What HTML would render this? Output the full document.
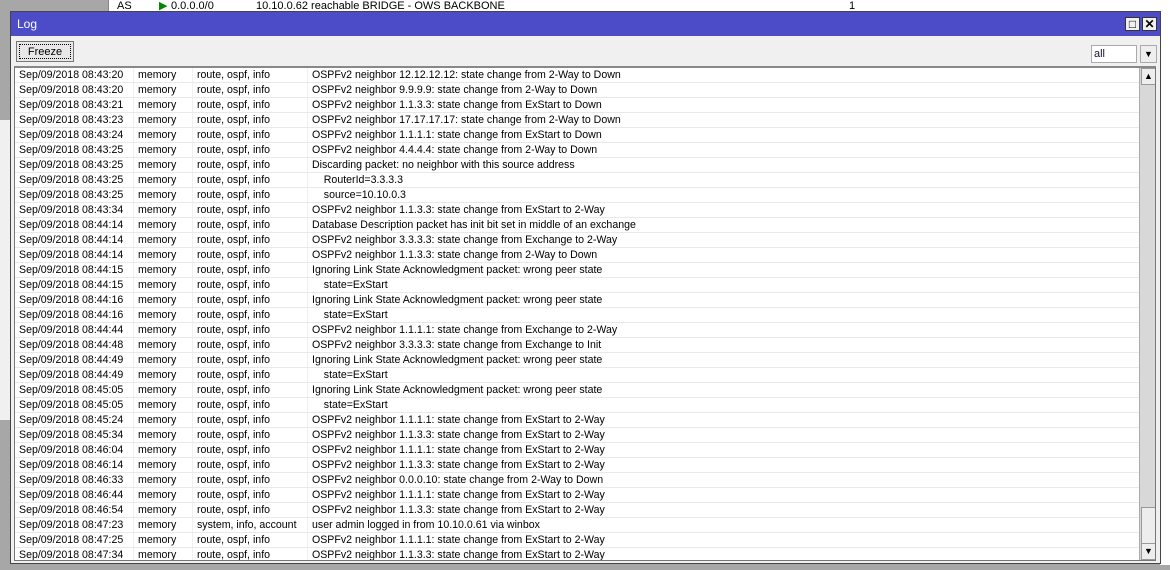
<!DOCTYPE html>
<html><head><style>
*{margin:0;padding:0;box-sizing:border-box}
body{width:1170px;height:570px;overflow:hidden;background:#a7a7a7;font-family:"Liberation Sans",sans-serif;font-size:10.6px;color:#000;position:relative}
.bgtop{position:absolute;left:108px;top:0;width:1062px;height:12px;background:#fff;border-left:1px solid #888}
.bgtop span{position:absolute;top:0;font-size:11px;line-height:12px}
.bgright{position:absolute;left:1160px;top:0;width:10px;height:565px;background:#fff}
.bgleft{position:absolute;left:0;top:120px;width:11px;height:300px;background:#f0f0f0}
.win{position:absolute;left:10px;top:11px;width:1151px;height:553px;background:#f0f0f0;border:1px solid #444}
.title{position:absolute;left:0;top:0;width:100%;height:24px;background:#4c4cc8;color:#fff;font-size:12px;line-height:24px;padding-left:6px}
.tb{position:absolute;top:5px;width:15px;height:14px;background:#f0f0f0;border:1px solid #333;font-size:12px;line-height:12px;text-align:center;color:#000;font-weight:bold}
.freeze{position:absolute;left:5px;top:29px;width:58px;height:21px;border:1px solid #777;background:#e8e8e8;font-size:11px;line-height:20px;text-align:center;outline:1px dotted #000;outline-offset:-4px}
.sel{position:absolute;left:1080px;top:33px;width:46px;height:18px;background:#fff;border:1px solid #aaa;color:#113;font-size:11px;line-height:16px;padding-left:2px}
.selb{position:absolute;left:1129px;top:33px;width:17px;height:18px;background:#eee;border:1px solid #aaa;text-align:center;font-size:9px;line-height:16px}
.list{position:absolute;left:3px;top:54px;width:1142px;height:495px;background:#fff;border:1px solid #777;border-top:2px solid #888;overflow:hidden}
.row{height:15px;line-height:14px;border-bottom:1px solid #e9e9e9;position:relative;white-space:nowrap}
.row span{position:absolute;top:0}
.c1{left:4px}.c2{left:123px}.c3{left:182px}.c4{left:297px}
.cl{position:absolute;top:0;width:1px;height:100%;background:#f0f0f0}
.sb{position:absolute;left:1124px;top:0;width:17px;height:100%;background:#d8d8d8;border-left:1px solid #aaa}
.sbb{position:absolute;left:1px;width:15px;height:17px;background:#eee;border:1px solid #999;text-align:center;font-size:9px;line-height:15px}
</style></head><body>
<div class="bgtop"><span style="left:8px">AS</span><span style="left:50px;color:#080">▶</span><span style="left:62px">0.0.0.0/0</span><span style="left:147px">10.10.0.62 reachable BRIDGE - OWS BACKBONE</span><span style="left:740px">1</span></div>
<div class="bgright"></div>
<div class="bgleft"></div>
<div class="win">
<div class="title">Log</div>
<div class="tb" style="left:1114px">□</div><div class="tb" style="left:1131px">✕</div>
<div class="freeze">Freeze</div>
<div class="sel">all</div><div class="selb">▼</div>
<div class="list">
<div class="cl" style="left:118px"></div><div class="cl" style="left:177px"></div><div class="cl" style="left:292px"></div>
<div id="rows">
<div class="row"><span class="c1">Sep/09/2018 08:43:20</span><span class="c2">memory</span><span class="c3">route, ospf, info</span><span class="c4">OSPFv2 neighbor 12.12.12.12: state change from 2-Way to Down</span></div>
<div class="row"><span class="c1">Sep/09/2018 08:43:20</span><span class="c2">memory</span><span class="c3">route, ospf, info</span><span class="c4">OSPFv2 neighbor 9.9.9.9: state change from 2-Way to Down</span></div>
<div class="row"><span class="c1">Sep/09/2018 08:43:21</span><span class="c2">memory</span><span class="c3">route, ospf, info</span><span class="c4">OSPFv2 neighbor 1.1.3.3: state change from ExStart to Down</span></div>
<div class="row"><span class="c1">Sep/09/2018 08:43:23</span><span class="c2">memory</span><span class="c3">route, ospf, info</span><span class="c4">OSPFv2 neighbor 17.17.17.17: state change from 2-Way to Down</span></div>
<div class="row"><span class="c1">Sep/09/2018 08:43:24</span><span class="c2">memory</span><span class="c3">route, ospf, info</span><span class="c4">OSPFv2 neighbor 1.1.1.1: state change from ExStart to Down</span></div>
<div class="row"><span class="c1">Sep/09/2018 08:43:25</span><span class="c2">memory</span><span class="c3">route, ospf, info</span><span class="c4">OSPFv2 neighbor 4.4.4.4: state change from 2-Way to Down</span></div>
<div class="row"><span class="c1">Sep/09/2018 08:43:25</span><span class="c2">memory</span><span class="c3">route, ospf, info</span><span class="c4">Discarding packet: no neighbor with this source address</span></div>
<div class="row"><span class="c1">Sep/09/2018 08:43:25</span><span class="c2">memory</span><span class="c3">route, ospf, info</span><span class="c4">&nbsp;&nbsp;&nbsp;&nbsp;RouterId=3.3.3.3</span></div>
<div class="row"><span class="c1">Sep/09/2018 08:43:25</span><span class="c2">memory</span><span class="c3">route, ospf, info</span><span class="c4">&nbsp;&nbsp;&nbsp;&nbsp;source=10.10.0.3</span></div>
<div class="row"><span class="c1">Sep/09/2018 08:43:34</span><span class="c2">memory</span><span class="c3">route, ospf, info</span><span class="c4">OSPFv2 neighbor 1.1.3.3: state change from ExStart to 2-Way</span></div>
<div class="row"><span class="c1">Sep/09/2018 08:44:14</span><span class="c2">memory</span><span class="c3">route, ospf, info</span><span class="c4">Database Description packet has init bit set in middle of an exchange</span></div>
<div class="row"><span class="c1">Sep/09/2018 08:44:14</span><span class="c2">memory</span><span class="c3">route, ospf, info</span><span class="c4">OSPFv2 neighbor 3.3.3.3: state change from Exchange to 2-Way</span></div>
<div class="row"><span class="c1">Sep/09/2018 08:44:14</span><span class="c2">memory</span><span class="c3">route, ospf, info</span><span class="c4">OSPFv2 neighbor 1.1.3.3: state change from 2-Way to Down</span></div>
<div class="row"><span class="c1">Sep/09/2018 08:44:15</span><span class="c2">memory</span><span class="c3">route, ospf, info</span><span class="c4">Ignoring Link State Acknowledgment packet: wrong peer state</span></div>
<div class="row"><span class="c1">Sep/09/2018 08:44:15</span><span class="c2">memory</span><span class="c3">route, ospf, info</span><span class="c4">&nbsp;&nbsp;&nbsp;&nbsp;state=ExStart</span></div>
<div class="row"><span class="c1">Sep/09/2018 08:44:16</span><span class="c2">memory</span><span class="c3">route, ospf, info</span><span class="c4">Ignoring Link State Acknowledgment packet: wrong peer state</span></div>
<div class="row"><span class="c1">Sep/09/2018 08:44:16</span><span class="c2">memory</span><span class="c3">route, ospf, info</span><span class="c4">&nbsp;&nbsp;&nbsp;&nbsp;state=ExStart</span></div>
<div class="row"><span class="c1">Sep/09/2018 08:44:44</span><span class="c2">memory</span><span class="c3">route, ospf, info</span><span class="c4">OSPFv2 neighbor 1.1.1.1: state change from Exchange to 2-Way</span></div>
<div class="row"><span class="c1">Sep/09/2018 08:44:48</span><span class="c2">memory</span><span class="c3">route, ospf, info</span><span class="c4">OSPFv2 neighbor 3.3.3.3: state change from Exchange to Init</span></div>
<div class="row"><span class="c1">Sep/09/2018 08:44:49</span><span class="c2">memory</span><span class="c3">route, ospf, info</span><span class="c4">Ignoring Link State Acknowledgment packet: wrong peer state</span></div>
<div class="row"><span class="c1">Sep/09/2018 08:44:49</span><span class="c2">memory</span><span class="c3">route, ospf, info</span><span class="c4">&nbsp;&nbsp;&nbsp;&nbsp;state=ExStart</span></div>
<div class="row"><span class="c1">Sep/09/2018 08:45:05</span><span class="c2">memory</span><span class="c3">route, ospf, info</span><span class="c4">Ignoring Link State Acknowledgment packet: wrong peer state</span></div>
<div class="row"><span class="c1">Sep/09/2018 08:45:05</span><span class="c2">memory</span><span class="c3">route, ospf, info</span><span class="c4">&nbsp;&nbsp;&nbsp;&nbsp;state=ExStart</span></div>
<div class="row"><span class="c1">Sep/09/2018 08:45:24</span><span class="c2">memory</span><span class="c3">route, ospf, info</span><span class="c4">OSPFv2 neighbor 1.1.1.1: state change from ExStart to 2-Way</span></div>
<div class="row"><span class="c1">Sep/09/2018 08:45:34</span><span class="c2">memory</span><span class="c3">route, ospf, info</span><span class="c4">OSPFv2 neighbor 1.1.3.3: state change from ExStart to 2-Way</span></div>
<div class="row"><span class="c1">Sep/09/2018 08:46:04</span><span class="c2">memory</span><span class="c3">route, ospf, info</span><span class="c4">OSPFv2 neighbor 1.1.1.1: state change from ExStart to 2-Way</span></div>
<div class="row"><span class="c1">Sep/09/2018 08:46:14</span><span class="c2">memory</span><span class="c3">route, ospf, info</span><span class="c4">OSPFv2 neighbor 1.1.3.3: state change from ExStart to 2-Way</span></div>
<div class="row"><span class="c1">Sep/09/2018 08:46:33</span><span class="c2">memory</span><span class="c3">route, ospf, info</span><span class="c4">OSPFv2 neighbor 0.0.0.10: state change from 2-Way to Down</span></div>
<div class="row"><span class="c1">Sep/09/2018 08:46:44</span><span class="c2">memory</span><span class="c3">route, ospf, info</span><span class="c4">OSPFv2 neighbor 1.1.1.1: state change from ExStart to 2-Way</span></div>
<div class="row"><span class="c1">Sep/09/2018 08:46:54</span><span class="c2">memory</span><span class="c3">route, ospf, info</span><span class="c4">OSPFv2 neighbor 1.1.3.3: state change from ExStart to 2-Way</span></div>
<div class="row"><span class="c1">Sep/09/2018 08:47:23</span><span class="c2">memory</span><span class="c3">system, info, account</span><span class="c4">user admin logged in from 10.10.0.61 via winbox</span></div>
<div class="row"><span class="c1">Sep/09/2018 08:47:25</span><span class="c2">memory</span><span class="c3">route, ospf, info</span><span class="c4">OSPFv2 neighbor 1.1.1.1: state change from ExStart to 2-Way</span></div>
<div class="row"><span class="c1">Sep/09/2018 08:47:34</span><span class="c2">memory</span><span class="c3">route, ospf, info</span><span class="c4">OSPFv2 neighbor 1.1.3.3: state change from ExStart to 2-Way</span></div>
</div>
<div class="sb"><div class="sbb" style="top:0">▲</div><div class="sbb" style="top:439px;height:37px;background:#ededed"></div><div class="sbb" style="bottom:0">▼</div></div>
</div>
</div>
</body></html>
